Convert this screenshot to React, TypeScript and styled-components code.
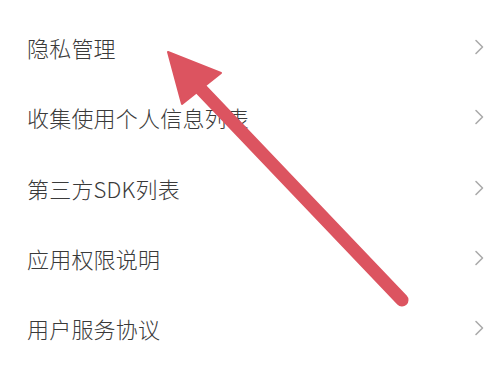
import React from "react";
import styled, { createGlobalStyle } from "styled-components";

const Global = createGlobalStyle`
  html, body { margin: 0; padding: 0; background: #ffffff; }
  body { width: 504px; height: 369px; overflow: hidden; }
`;

const Page = styled.div`
  position: relative;
  width: 504px;
  height: 369px;
  background: #ffffff;
  padding-top: 12px;
  box-sizing: border-box;
  font-family: "Noto Sans CJK SC", "Noto Sans", sans-serif;
`;

const List = styled.ul`
  list-style: none;
  margin: 0;
  padding: 0;
  display: flex;
  flex-direction: column;
`;

const Row = styled.li`
  height: 70.3px;
  display: flex;
  align-items: center;
  justify-content: space-between;
  padding: 0 20px 0 27px;
`;

const Label = styled.span`
  font-size: 22px;
  line-height: 1;
  font-weight: 300;
  color: #3a3a3a;
  letter-spacing: 0.2px;
`;

const Chevron = () => (
  <svg width="10" height="16" viewBox="0 0 10 16" fill="none">
    <path d="M2 1.5 L8.5 8 L2 14.5" stroke="#ababab" strokeWidth="1.6" strokeLinecap="round" strokeLinejoin="round" />
  </svg>
);

const ArrowLayer = styled.svg`
  position: absolute;
  left: 0;
  top: 0;
  pointer-events: none;
`;

const items = ["隐私管理", "收集使用个人信息列表", "第三方SDK列表", "应用权限说明", "用户服务协议"];

export default function App() {
  return (
    <Page>
      <Global />
      <List>
        {items.map((t) => (
          <Row key={t}>
            <Label>{t}</Label>
            <Chevron />
          </Row>
        ))}
      </List>
      <ArrowLayer width="504" height="369" viewBox="0 0 504 369">
        <line x1="196" y1="84" x2="402" y2="300" stroke="#dc5460" strokeWidth="13" strokeLinecap="round" />
        <polygon points="168,52 221,73 182,104" fill="#dc5460" stroke="#dc5460" strokeWidth="2" strokeLinejoin="round" />
      </ArrowLayer>
    </Page>
  );
}
